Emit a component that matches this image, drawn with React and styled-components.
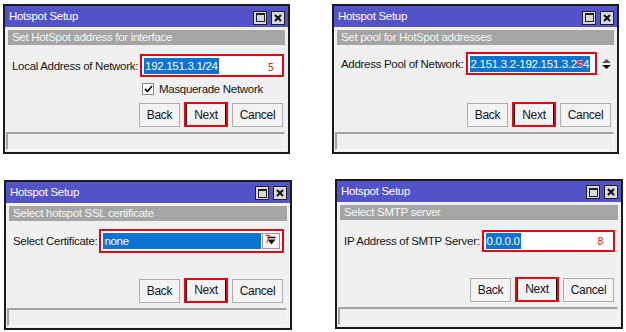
import React from "react";
import styled, { createGlobalStyle } from "styled-components";

const Global = createGlobalStyle`
  html, body { margin: 0; padding: 0; background: #ffffff; }
  body { font-family: "Liberation Sans", Arial, sans-serif; }
`;

const FONT = `"Liberation Sans", Arial, sans-serif`;

const Page = styled.div`
  display: grid;
  grid-template-columns: 287px 287px;
  column-gap: 42px;
  row-gap: 22px;
  padding: 4px 0 0 3px;
  width: 626px;
  height: 332px;
  box-sizing: border-box;
`;

const Win = styled.div`
  width: ${(p) => p.$w || 287}px;
  height: 150px;
  box-sizing: border-box;
  margin-left: ${(p) => p.$dx || 0}px;
  margin-top: ${(p) => p.$dy || 0}px;
  border: 2px solid #1b1b1b;
  background: #f0f0f0;
  display: flex;
  flex-direction: column;
  font-family: ${FONT};
  font-size: 11.5px;
  letter-spacing: -0.3px;
  color: #161616;
`;

const TitleBar = styled.div`
  height: 21px;
  flex: none;
  background: #5353c9;
  display: flex;
  align-items: center;
  justify-content: space-between;
  padding: 0 3px 0 4px;
`;

const Title = styled.span`
  color: #ffffff;
  font-size: 11.5px;
  line-height: 21px;
`;

const TitleButtons = styled.div`
  display: flex;
  gap: 4px;
  align-items: center;
  margin-top: 2px;
`;

const TitleBtn = styled.div`
  width: 14px;
  height: 14px;
  box-sizing: border-box;
  border: 1px solid #222;
  background: #d9d9d9;
  display: flex;
  align-items: center;
  justify-content: center;
`;

const MaxSquare = styled.div`
  width: 9px;
  height: 9px;
  box-sizing: border-box;
  border: 1px solid #222;
  border-top-width: 2px;
`;

const Subtitle = styled.div`
  flex: none;
  margin: 3px 3px 0 3px;
  height: 15px;
  line-height: 15px;
  background: #a5a5a5;
  color: #f6f6f6;
  padding-left: 4px;
  white-space: nowrap;
`;

const Body = styled.div`
  flex: 1;
  padding: 9px 0 0 7px;
  display: flex;
  flex-direction: column;
`;

const FieldRow = styled.div`
  display: flex;
  align-items: center;
  gap: 2px;
  margin-top: ${(p) => p.$mt || 0}px;
`;

const Label = styled.span`
  white-space: nowrap;
  color: #161616;
`;

const Field = styled.div`
  position: relative;
  width: ${(p) => p.$w}px;
  height: ${(p) => p.$h || 23}px;
  flex: none;
  box-sizing: border-box;
  border: 2px solid #e40613;
  background: #ffffff;
  padding: 2px 2px;
  display: flex;
  align-items: center;
  overflow: hidden;
  white-space: nowrap;
`;

const Selected = styled.span`
  background: #0a74d4;
  color: #ffffff;
  line-height: 16px;
  padding: 0 1px 0 1px;
  ${(p) => (p.$fill ? "flex: 1; align-self: stretch; display: flex; align-items: center;" : "")}
`;

const Note = styled.span`
  position: absolute;
  ${(p) => (p.$l !== undefined ? `left: ${p.$l}px;` : `right: ${p.$r}px;`)}
  bottom: ${(p) => p.$b ?? 2}px;
  color: #ee1c24;
  font-family: "DejaVu Sans", sans-serif;
  font-size: 10px;
  letter-spacing: 0;
  line-height: 11px;
`;

const Spinner = styled.div`
  margin-left: 2px;
  display: flex;
  align-items: center;
`;

const ComboBtn = styled.div`
  position: relative;
  width: 18px;
  flex: none;
  align-self: stretch;
  box-sizing: border-box;
  border: 1px solid #9a9a9a;
  background: #fafafa;
  display: flex;
  align-items: center;
  justify-content: flex-end;
  padding-right: 3px;
  margin-left: 1px;
`;

const CheckRow = styled.div`
  display: flex;
  align-items: center;
  gap: 5px;
  margin: 6px 0 0 130px;
  color: #161616;
  white-space: nowrap;
`;

const CheckBox = styled.span`
  width: 12px;
  height: 12px;
  box-sizing: border-box;
  border: 1px solid #8a8a8a;
  background: #fff;
  display: flex;
  align-items: center;
  justify-content: center;
`;

const ButtonRow = styled.div`
  flex: none;
  height: 24px;
  display: flex;
  justify-content: flex-end;
  gap: 4px;
  padding-right: ${(p) => p.$pr || 5}px;
`;

const Btn = styled.button`
  width: ${(p) => p.$w || 41}px;
  height: ${(p) => (p.$next ? 25 : 24)}px;
  margin-top: ${(p) => (p.$next ? -1 : 0)}px;
  box-sizing: border-box;
  border: ${(p) => (p.$next ? "2px solid #e40613" : "1px solid #adadad")};
  background: #f3f3f3;
  ${(p) => (p.$next ? "box-shadow: inset -1px 0 0 #000, inset 1px 0 0 #3a1010;" : "")}
  font-family: ${FONT};
  font-size: 12px;
  letter-spacing: -0.3px;
  color: #141428;
  padding: 0;
  cursor: default;
`;

const StatusBar = styled.div`
  flex: none;
  height: 18px;
  margin: 5px 3px 2px 1px;
  box-sizing: border-box;
  border-top: 2px solid #a3a3a3;
  border-left: 2px solid #a3a3a3;
  border-right: 1px solid #fbfbfb;
  border-bottom: 1px solid #fbfbfb;
`;

function CloseIcon() {
  return (
    <svg width="8" height="8" viewBox="0 0 8 8">
      <path d="M1 1 L7 7 M7 1 L1 7" stroke="#111" strokeWidth="2" />
    </svg>
  );
}

function Window({ sub, children, w, dx, dy, pr }) {
  return (
    <Win $w={w} $dx={dx} $dy={dy}>
      <TitleBar>
        <Title>Hotspot Setup</Title>
        <TitleButtons>
          <TitleBtn>
            <MaxSquare />
          </TitleBtn>
          <TitleBtn>
            <CloseIcon />
          </TitleBtn>
        </TitleButtons>
      </TitleBar>
      <Subtitle>{sub}</Subtitle>
      <Body>{children}</Body>
      <ButtonRow $pr={pr}>
        <Btn $w={41}>Back</Btn>
        <Btn $w={44} $next>
          Next
        </Btn>
        <Btn $w={51}>Cancel</Btn>
      </ButtonRow>
      <StatusBar />
    </Win>
  );
}

export default function App() {
  return (
    <>
      <Global />
      <Page>
        <Window sub="Set HotSpot address for interface">
          <FieldRow>
            <Label>Local Address of Network:</Label>
            <Field $w={144}>
              <Selected>192.151.3.1/24</Selected>
              <Note $r={8} $b={2}>5</Note>
            </Field>
          </FieldRow>
          <CheckRow>
            <CheckBox>
              <svg width="9" height="8" viewBox="0 0 9 8">
                <path d="M1 4 L3.5 6.5 L8 1" stroke="#111" strokeWidth="1.8" fill="none" />
              </svg>
            </CheckBox>
            Masquerade Network
          </CheckRow>
        </Window>

        <Window sub="Set pool for HotSpot addresses" pr={6}>
          <FieldRow $mt={-2}>
            <Label>Address Pool of Network:</Label>
            <Field $w={131}>
              <Selected>2.151.3.2-192.151.3.254</Selected>
              <Note $r={11} $b={4}>6</Note>
            </Field>
            <Spinner>
              <svg width="11" height="12" viewBox="0 0 11 12">
                <path d="M1 5 L5.5 1 L10 5 Z" fill="#555" />
                <path d="M1 7 L5.5 11 L10 7 Z" fill="#111" />
              </svg>
            </Spinner>
          </FieldRow>
        </Window>

        <Window sub="Select hotspot SSL certificate" w={288} dx={1} dy={1} pr={7}>
          <FieldRow $mt={-1}>
            <Label>Select Certificate:</Label>
            <Field $w={185} $h={24}>
              <Selected $fill>none</Selected>
              <ComboBtn>
                <svg width="9" height="9" viewBox="0 0 9 9">
                  <path d="M0.5 1.5 H8.5" stroke="#111" strokeWidth="1.5" />
                  <path d="M0.5 3.5 L8.5 3.5 L4.5 8.5 Z" fill="#111" />
                </svg>
                <Note $l={1} $b={3}>7</Note>
              </ComboBtn>
            </Field>
          </FieldRow>
        </Window>

        <Window sub="Select SMTP server" w={288} dx={3} pr={7}>
          <FieldRow $mt={1}>
            <Label>IP Address of SMTP Server:</Label>
            <Field $w={133} $h={22}>
              <Selected>0.0.0.0</Selected>
              <Note $r={9} $b={3}>8</Note>
            </Field>
          </FieldRow>
        </Window>
      </Page>
    </>
  );
}
